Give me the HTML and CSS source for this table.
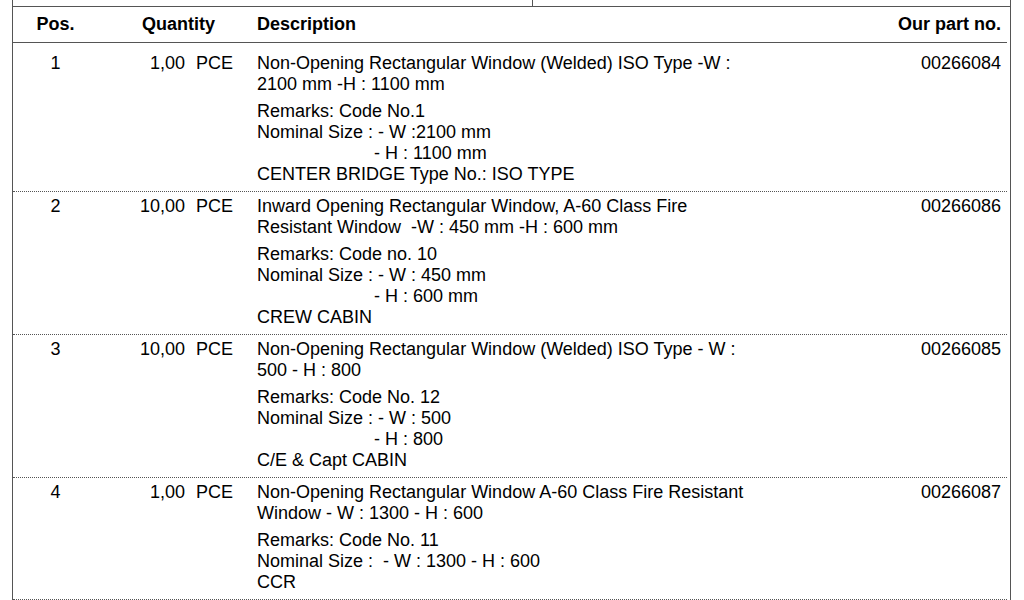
FILE: index.html
```html
<!DOCTYPE html>
<html lang="en">
<head>
<meta charset="utf-8">
<title>Order positions</title>
<link rel="stylesheet" href="styles.css">
</head>
<body>
<div class="doc">
  <div class="prev">
    <div class="prev-left"></div>
    <div class="prev-right"></div>
  </div>
  <div class="table">
    <div class="head">
      <div class="c-pos">Pos.</div>
      <div class="c-qtyhead">Quantity</div>
      <div class="c-desc">Description</div>
      <div class="c-part">Our part no.</div>
    </div>

    <div class="row">
      <div class="c-pos">1</div>
      <div class="c-num">1,00</div>
      <div class="c-unit">PCE</div>
      <div class="c-desc">
        <div class="main">Non-Opening Rectangular Window (Welded) ISO Type -W :<br>2100 mm -H : 1100 mm</div>
        <div class="remarks">Remarks: Code No.1<br>Nominal Size : - W :2100 mm<span class="indent">- H : 1100 mm</span>CENTER BRIDGE Type No.: ISO TYPE</div>
      </div>
      <div class="c-part">00266084</div>
    </div>

    <div class="row">
      <div class="c-pos">2</div>
      <div class="c-num">10,00</div>
      <div class="c-unit">PCE</div>
      <div class="c-desc">
        <div class="main">Inward Opening Rectangular Window, A-60 Class Fire<br>Resistant Window &nbsp;-W : 450 mm -H : 600 mm</div>
        <div class="remarks">Remarks: Code no. 10<br>Nominal Size : - W : 450 mm<span class="indent">- H : 600 mm</span>CREW CABIN</div>
      </div>
      <div class="c-part">00266086</div>
    </div>

    <div class="row">
      <div class="c-pos">3</div>
      <div class="c-num">10,00</div>
      <div class="c-unit">PCE</div>
      <div class="c-desc">
        <div class="main">Non-Opening Rectangular Window (Welded) ISO Type - W :<br>500 - H : 800</div>
        <div class="remarks">Remarks: Code No. 12<br>Nominal Size : - W : 500<span class="indent">- H : 800</span>C/E &amp; Capt CABIN</div>
      </div>
      <div class="c-part">00266085</div>
    </div>

    <div class="row">
      <div class="c-pos">4</div>
      <div class="c-num">1,00</div>
      <div class="c-unit">PCE</div>
      <div class="c-desc">
        <div class="main">Non-Opening Rectangular Window A-60 Class Fire Resistant<br>Window - W : 1300 - H : 600</div>
        <div class="remarks">Remarks: Code No. 11<br>Nominal Size : &nbsp;- W : 1300 - H : 600<br>CCR</div>
      </div>
      <div class="c-part">00266087</div>
    </div>
  </div>
</div>
</body>
</html>
```

FILE: styles.css
```css
html, body {
  margin: 0;
  padding: 0;
  background: #ffffff;
}

body {
  font-family: "Liberation Sans", Arial, Helvetica, sans-serif;
  font-size: 18px;
  line-height: 21px;
  color: #000000;
}

.doc {
  margin-left: 12px;
  width: 997px;
  min-height: 600px;
  border-left: 1px solid #555555;
  border-right: 1px solid #555555;
}

.prev {
  display: flex;
  height: 6px;
  border-bottom: 1px solid #555555;
}

.prev-left {
  width: 519px;
  border-right: 1px solid #555555;
}

.prev-right {
  flex: 1;
}

.table {
  margin-right: 3px;
}

.head,
.row {
  display: grid;
  grid-template-columns: 85px 87px 72px 1fr 120px;
  padding-right: 6px;
}

.head {
  font-weight: bold;
  padding-top: 7px;
  padding-bottom: 7px;
  border-bottom: 1px solid #555555;
}

.row {
  padding-top: 4px;
  padding-bottom: 6px;
  border-bottom: 1px dotted #555555;
}

.row:nth-child(2) {
  padding-top: 10px;
}

.c-pos {
  text-align: center;
}

.c-qtyhead {
  grid-column: 2 / 4;
  padding-left: 44px;
}

.c-num {
  text-align: right;
}

.c-unit {
  padding-left: 11px;
}

.c-part {
  text-align: right;
}

.main,
.remarks {
  white-space: nowrap;
}

.remarks {
  margin-top: 6px;
}

.indent {
  display: block;
  padding-left: 117px;
}
```
